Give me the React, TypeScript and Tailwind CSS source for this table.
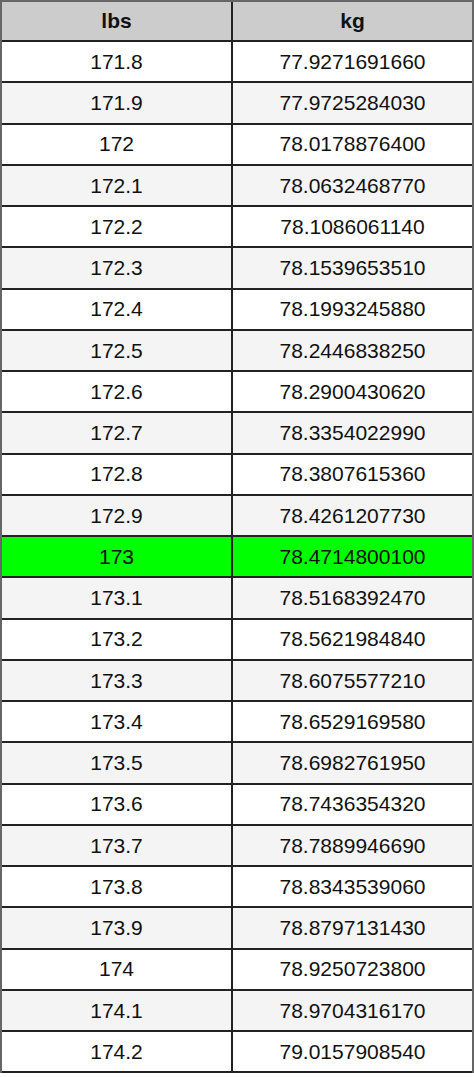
const rows: [string, string][] = [
  ["171.8", "77.9271691660"],
  ["171.9", "77.9725284030"],
  ["172", "78.0178876400"],
  ["172.1", "78.0632468770"],
  ["172.2", "78.1086061140"],
  ["172.3", "78.1539653510"],
  ["172.4", "78.1993245880"],
  ["172.5", "78.2446838250"],
  ["172.6", "78.2900430620"],
  ["172.7", "78.3354022990"],
  ["172.8", "78.3807615360"],
  ["172.9", "78.4261207730"],
  ["173", "78.4714800100"],
  ["173.1", "78.5168392470"],
  ["173.2", "78.5621984840"],
  ["173.3", "78.6075577210"],
  ["173.4", "78.6529169580"],
  ["173.5", "78.6982761950"],
  ["173.6", "78.7436354320"],
  ["173.7", "78.7889946690"],
  ["173.8", "78.8343539060"],
  ["173.9", "78.8797131430"],
  ["174", "78.9250723800"],
  ["174.1", "78.9704316170"],
  ["174.2", "79.0157908540"],
];

export default function App() {
  return (
    <div className="w-[474px] bg-white text-[21px] text-[#111] font-['Liberation_Sans',Arial,sans-serif]">
      <div className="border-x-2 border-t-2 border-[#666]">
        {/* header */}
        <div className="grid grid-cols-[231px_1fr] h-[40px] bg-[#cccccc] border-b-2 border-[#222] font-bold">
          <div className="flex items-center justify-center border-r-2 border-[#222]">lbs</div>
          <div className="flex items-center justify-center">kg</div>
        </div>
        {rows.map(([lbs, kg], i) => {
          const bg = lbs === "173" ? "bg-[#00ff00]" : i % 2 === 0 ? "bg-white" : "bg-[#f4f4f4]";
          return (
            <div key={lbs} className={`grid grid-cols-[231px_1fr] h-[41.25px] border-b-2 border-[#222] ${bg}`}>
              <div className="flex items-center justify-center border-r-2 border-[#222]">{lbs}</div>
              <div className="flex items-center justify-center">{kg}</div>
            </div>
          );
        })}
      </div>
    </div>
  );
}
